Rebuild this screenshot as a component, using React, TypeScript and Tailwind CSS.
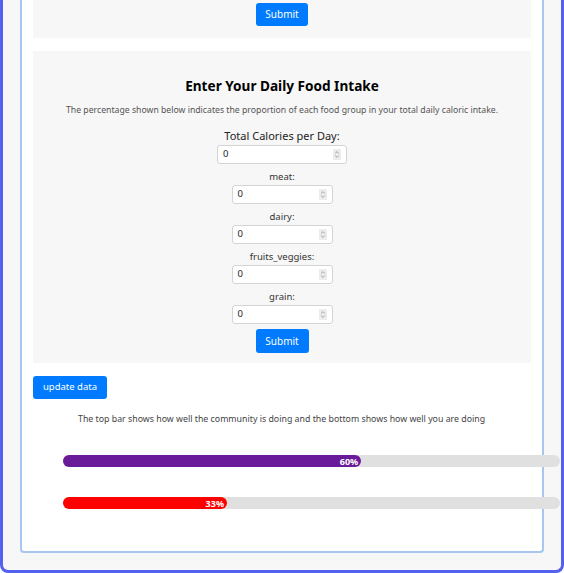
import React from 'react';

const font = { fontFamily: '"Noto Sans", "Open Sans", sans-serif' };

function NumberField({ wide }: { wide?: boolean }) {
  return (
    <div
      className={`relative mx-auto flex h-[19px] items-center rounded-[3px] border border-[#d4d4d4] bg-white ${
        wide ? 'w-[130px]' : 'w-[101px]'
      }`}
    >
      <span className="pl-[5px] text-[9.5px] text-[#222]">0</span>
      <div className="absolute right-[5px] top-[3px] flex h-[11px] w-[8px] items-center justify-center rounded-[1px] bg-[#ececec]">
        <svg width="6" height="9" viewBox="0 0 6 9" fill="none" stroke="#9a9a9a" strokeWidth="0.9">
          <path d="M1.2 3.4 L3 1.6 L4.8 3.4" />
          <path d="M1.2 5.6 L3 7.4 L4.8 5.6" />
        </svg>
      </div>
    </div>
  );
}

function Field({ label }: { label: string }) {
  return (
    <div className="mt-[6px] flex flex-col items-center">
      <label className="h-[14px] text-[9.5px] leading-[14px] text-[#333]">{label}</label>
      <div className="mt-[1px]">
        <NumberField />
      </div>
    </div>
  );
}

function Bar({ pct, color }: { pct: number; color: string }) {
  return (
    <div className="ml-[30px] h-[12px] w-[497px] rounded-full bg-[#e0e0e0]">
      <div
        className={`flex h-full items-center justify-end rounded-full pr-[3px] ${color}`}
        style={{ width: `${pct}%` }}
      >
        <span className="text-[9px] font-bold leading-none text-white">{pct}%</span>
      </div>
    </div>
  );
}

export default function App() {
  return (
    <div
      style={font}
      className="flex h-[573px] w-[564px] flex-col overflow-hidden rounded-b-[8px] border-x-[3px] border-b-[3px] border-[#5461ee] bg-[#f7f7f7] pl-[17px]"
    >
      <div className="h-[553px] w-[524px] rounded-b-[4px] border-2 border-t-0 border-[#a6c8f0] bg-white px-[11px]">
        <section className="flex justify-center bg-[#f7f7f7] pb-[12px] pt-[3px]">
          <button className="h-[23px] w-[52px] rounded-[3px] bg-[#007bff] text-[10px] text-white">
            Submit
          </button>
        </section>

        <section className="mt-[13px] flex h-[312px] flex-col items-center bg-[#f7f7f7] pt-[25px]">
          <h2 className="h-[20px] text-[13.6px] font-bold leading-[20px] text-black">
            Enter Your Daily Food Intake
          </h2>
          <p className="mt-[8px] h-[13px] text-[8.7px] leading-[13px] text-[#555]">
            The percentage shown below indicates the proportion of each food group in your total daily caloric intake.
          </p>
          <label className="mt-[11px] h-[16px] text-[11px] leading-[16px] text-[#222]">
            Total Calories per Day:
          </label>
          <div className="mt-[1px]">
            <NumberField wide />
          </div>
          <Field label="meat:" />
          <Field label="dairy:" />
          <Field label="fruits_veggies:" />
          <Field label="grain:" />
          <button className="mt-[5px] h-[24px] w-[53px] rounded-[3px] bg-[#007bff] text-[10px] text-white">
            Submit
          </button>
        </section>

        <button className="mt-[13px] h-[23px] w-[74px] rounded-[3px] bg-[#007bff] text-[9.5px] text-white">
          update data
        </button>

        <p className="mt-[13px] h-[14px] pl-[45px] text-[8.8px] leading-[14px] text-[#444]">
          The top bar shows how well the community is doing and the bottom shows how well you are doing
        </p>

        <div className="mt-[29px]">
          <Bar pct={60} color="bg-[#6a1b9a]" />
        </div>
        <div className="mt-[30px]">
          <Bar pct={33} color="bg-[#ff0000]" />
        </div>
      </div>
    </div>
  );
}
